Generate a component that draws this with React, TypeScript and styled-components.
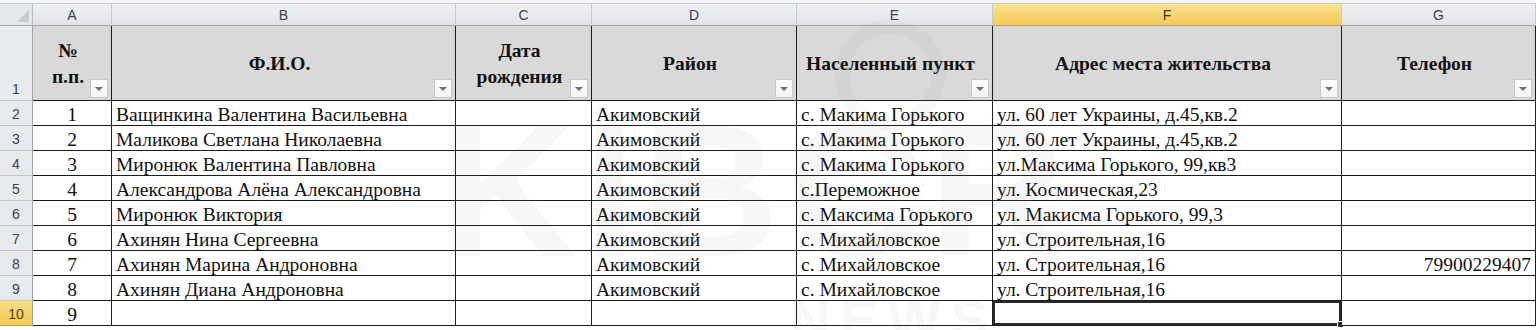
import React from "react";
import styled, { createGlobalStyle, css } from "styled-components";

const GlobalStyle = createGlobalStyle`
  html, body { margin: 0; padding: 0; background: #ffffff; }
  * { box-sizing: border-box; }
`;

const SERIF = `"Liberation Serif", "Times New Roman", serif`;
const SANS = `"Liberation Sans", Arial, sans-serif`;

const COLS = "33px 79px 344px 136px 205px 196px 349px 194px";

const Page = styled.div`
  position: relative;
  width: 1536px;
  height: 330px;
  overflow: hidden;
  background: #ffffff;
  font-family: ${SERIF};
`;

const TopStrip = styled.div`
  height: 4px;
  background: #f3f4f6;
  border-bottom: 1px solid #c9ccd1;
`;

const Grid = styled.div`
  display: grid;
  grid-template-columns: ${COLS};
  grid-template-rows: 22px 75px repeat(9, 25px);
`;

const Corner = styled.div`
  position: relative;
  background: #e4e7ec;
  border-right: 1px solid #b6bbc2;
  border-bottom: 1px solid #9fa5ad;
  &::after {
    content: "";
    position: absolute;
    right: 3px;
    bottom: 3px;
    width: 0;
    height: 0;
    border-left: 12px solid transparent;
    border-bottom: 12px solid #c8ccd2;
  }
`;

const ColHead = styled.div<{ $active?: boolean }>`
  display: flex;
  align-items: center;
  justify-content: center;
  font-family: ${SANS};
  font-size: 14px;
  color: #3d4148;
  background: linear-gradient(#eef0f3, #e1e5ea);
  border-right: 1px solid #c3c8cf;
  border-bottom: 1px solid #9fa5ad;
  ${(p) =>
    p.$active &&
    css`
      background: linear-gradient(#fbe49a, #f7d36b 60%, #f4cb5a);
      border-bottom: 1px solid #c9a24a;
      color: #3a3320;
    `}
`;

const RowHead = styled.div<{ $active?: boolean; $bottom?: boolean }>`
  display: flex;
  align-items: ${(p) => (p.$bottom ? "flex-end" : "center")};
  justify-content: center;
  padding-bottom: ${(p) => (p.$bottom ? "3px" : "0")};
  padding-top: ${(p) => (p.$bottom ? "0" : "2px")};
  font-family: ${SANS};
  font-size: 14px;
  color: #3d4148;
  background: #e6e9ee;
  border-right: 1px solid #9fa5ad;
  border-bottom: 1px solid #c3c8cf;
  ${(p) =>
    p.$active &&
    css`
      background: linear-gradient(#f9dc82, #f3c954);
      color: #4a3f20;
      border-bottom: 1px solid #c9a24a;
    `}
`;

const HeadCell = styled.div`
  position: relative;
  display: flex;
  align-items: center;
  justify-content: center;
  text-align: center;
  padding: 2px 12px 0 4px;
  background: #d9d9d9;
  font-family: ${SERIF};
  font-weight: bold;
  font-size: 19.5px;
  line-height: 26px;
  color: #111111;
  white-space: nowrap;
  border-right: 1px solid #1c1c1c;
  border-bottom: 1px solid #1c1c1c;
`;

const FilterBtn = styled.span`
  position: absolute;
  right: 3px;
  bottom: 2px;
  width: 18px;
  height: 19px;
  background: linear-gradient(#ffffff, #f1f2f4);
  border: 1px solid #c7cad0;
  display: flex;
  align-items: center;
  justify-content: center;
  &::after {
    content: "";
    width: 0;
    height: 0;
    border-left: 4px solid transparent;
    border-right: 4px solid transparent;
    border-top: 4px solid #6b6f76;
  }
`;

const Cell = styled.div<{ $align?: "left" | "center" | "right"; $selected?: boolean }>`
  position: relative;
  display: flex;
  align-items: center;
  justify-content: ${(p) =>
    p.$align === "center" ? "center" : p.$align === "right" ? "flex-end" : "flex-start"};
  padding: 3px 4px 0 4px;
  font-family: ${SERIF};
  font-size: 19.5px;
  line-height: 22px;
  color: #111111;
  white-space: nowrap;
  border-right: 1px solid #1c1c1c;
  border-bottom: 1px solid #1c1c1c;
  background: #ffffff;
  ${(p) =>
    p.$selected &&
    css`
      box-shadow: inset 0 0 0 2px #2a2a2a;
      &::after {
        content: "";
        position: absolute;
        right: -3px;
        bottom: -3px;
        width: 5px;
        height: 5px;
        background: #2a2a2a;
        border: 1px solid #ffffff;
      }
    `}
`;

const Watermark = styled.div`
  position: absolute;
  left: 440px;
  top: 95px;
  pointer-events: none;
  font-family: ${SANS};
  font-weight: bold;
  font-size: 190px;
  letter-spacing: 6px;
  line-height: 1;
  color: rgba(120, 120, 120, 0.06);
`;

const WatermarkSub = styled.div`
  position: absolute;
  left: 790px;
  top: 292px;
  pointer-events: none;
  font-family: ${SANS};
  font-weight: bold;
  font-size: 56px;
  letter-spacing: 10px;
  line-height: 1;
  color: rgba(120, 120, 120, 0.06);
`;

const WatermarkRing = styled.div`
  position: absolute;
  left: 835px;
  top: 20px;
  width: 110px;
  height: 110px;
  border-radius: 50%;
  border: 14px solid rgba(120, 120, 120, 0.05);
  pointer-events: none;
`;

const letters = ["A", "B", "C", "D", "E", "F", "G"];

const headers: { label: React.ReactNode }[] = [
  { label: <>№<br />п.п.</> },
  { label: "Ф.И.О." },
  { label: <>Дата<br />рождения</> },
  { label: "Район" },
  { label: "Населенный пункт" },
  { label: "Адрес места жительства" },
  { label: "Телефон" },
];

type Row = [string, string, string, string, string, string, string];

const rows: Row[] = [
  ["1", "Ващинкина Валентина Васильевна", "", "Акимовский", "с. Макима Горького", "ул. 60 лет Украины, д.45,кв.2", ""],
  ["2", "Маликова Светлана Николаевна", "", "Акимовский", "с. Макима Горького", "ул. 60 лет Украины, д.45,кв.2", ""],
  ["3", "Миронюк Валентина Павловна", "", "Акимовский", "с. Макима Горького", "ул.Максима Горького, 99,кв3", ""],
  ["4", "Александрова Алёна Александровна", "", "Акимовский", "с.Переможное", "ул. Космическая,23", ""],
  ["5", "Миронюк Виктория", "", "Акимовский", "с. Максима Горького", "ул. Макисма Горького, 99,3", ""],
  ["6", "Ахинян Нина Сергеевна", "", "Акимовский", "с. Михайловское", "ул. Строительная,16", ""],
  ["7", "Ахинян Марина Андроновна", "", "Акимовский", "с. Михайловское", "ул. Строительная,16", "79900229407"],
  ["8", "Ахинян Диана Андроновна", "", "Акимовский", "с. Михайловское", "ул. Строительная,16", ""],
  ["9", "", "", "", "", "", ""],
];

export default function App() {
  return (
    <Page>
      <GlobalStyle />
      <TopStrip />
      <Grid>
        <Corner />
        {letters.map((l) => (
          <ColHead key={l} $active={l === "F"}>
            {l}
          </ColHead>
        ))}
        <RowHead $bottom>1</RowHead>
        {headers.map((h, i) => (
          <HeadCell key={i}>
            <span>{h.label}</span>
            <FilterBtn />
          </HeadCell>
        ))}
        {rows.map((r, ri) => {
          const rowNum = ri + 2;
          return (
            <React.Fragment key={rowNum}>
              <RowHead $active={rowNum === 10}>{rowNum}</RowHead>
              {r.map((v, ci) => (
                <Cell
                  key={ci}
                  $align={ci === 0 ? "center" : ci === 6 ? "right" : "left"}
                  $selected={rowNum === 10 && ci === 5}
                >
                  {v}
                </Cell>
              ))}
            </React.Fragment>
          );
        })}
      </Grid>
      <WatermarkRing />
      <Watermark>KIBCR</Watermark>
      <WatermarkSub>NEWS</WatermarkSub>
    </Page>
  );
}
